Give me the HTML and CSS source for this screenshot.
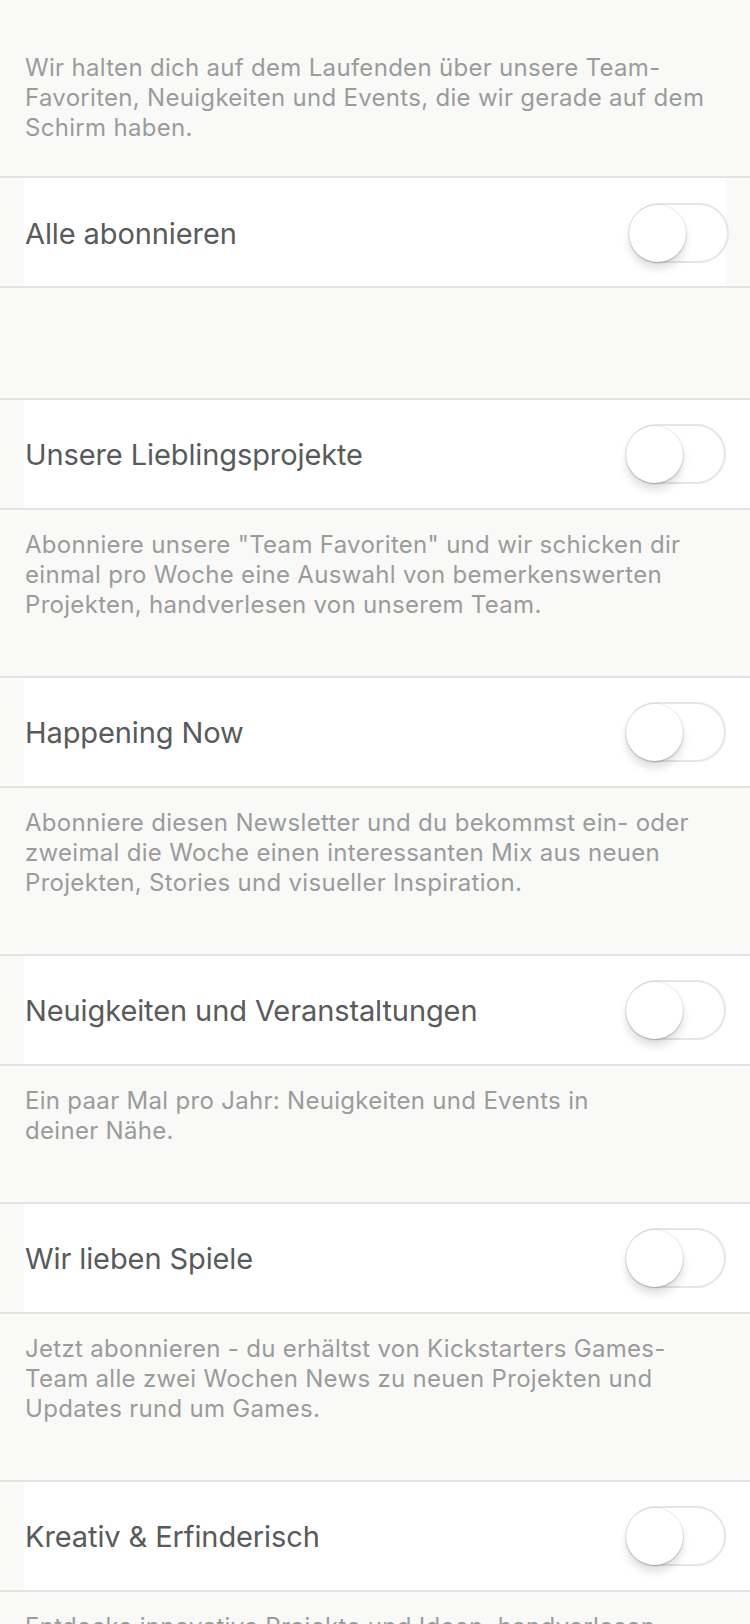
FILE: index.html
```html
<!DOCTYPE html>
<html lang="de">
<head>
<meta charset="utf-8">
<title>Newsletter</title>
<link rel="stylesheet" href="styles.css">
</head>
<body>
<div class="page">
  <p class="intro">Wir halten dich auf dem Laufenden über unsere Team-<br>Favoriten, Neuigkeiten und Events, die wir gerade auf dem<br>Schirm haben.</p>

  <div class="row row-all">
    <div class="row-inner">
      <span class="row-title">Alle abonnieren</span>
      <span class="switch"><span class="knob"></span></span>
    </div>
  </div>

  <div class="spacer"></div>

  <div class="row">
    <div class="row-inner">
      <span class="row-title">Unsere Lieblingsprojekte</span>
      <span class="switch"><span class="knob"></span></span>
    </div>
  </div>
  <p class="desc">Abonniere unsere "Team Favoriten" und wir schicken dir<br>einmal pro Woche eine Auswahl von bemerkenswerten<br>Projekten, handverlesen von unserem Team.</p>

  <div class="row">
    <div class="row-inner">
      <span class="row-title">Happening Now</span>
      <span class="switch"><span class="knob"></span></span>
    </div>
  </div>
  <p class="desc">Abonniere diesen Newsletter und du bekommst ein- oder<br>zweimal die Woche einen interessanten Mix aus neuen<br>Projekten, Stories und visueller Inspiration.</p>

  <div class="row">
    <div class="row-inner">
      <span class="row-title">Neuigkeiten und Veranstaltungen</span>
      <span class="switch"><span class="knob"></span></span>
    </div>
  </div>
  <p class="desc">Ein paar Mal pro Jahr: Neuigkeiten und Events in<br>deiner Nähe.</p>

  <div class="row">
    <div class="row-inner">
      <span class="row-title">Wir lieben Spiele</span>
      <span class="switch"><span class="knob"></span></span>
    </div>
  </div>
  <p class="desc">Jetzt abonnieren - du erhältst von Kickstarters Games-<br>Team alle zwei Wochen News zu neuen Projekten und<br>Updates rund um Games.</p>

  <div class="row">
    <div class="row-inner">
      <span class="row-title">Kreativ &amp; Erfinderisch</span>
      <span class="switch"><span class="knob"></span></span>
    </div>
  </div>
  <p class="desc">Entdecke innovative Projekte und Ideen, handverlesen<br>von unserem Team.</p>
</div>
</body>
</html>
```

FILE: styles.css
```css
* { box-sizing: border-box; }

html, body {
  margin: 0;
  padding: 0;
  background: #f9f9f8;
}

body {
  font-family: Inter, Roboto, "Liberation Sans", sans-serif;
  -webkit-font-smoothing: antialiased;
}

.page {
  width: 750px;
  overflow: hidden;
}

.intro {
  margin: 0;
  padding: 53px 24px 33px 25px;
  font-size: 24px;
  line-height: 30px;
  letter-spacing: 0.3px;
  color: #9a9c9c;
}

.desc {
  margin: 0;
  padding: 20px 24px 56px 25px;
  font-size: 24px;
  line-height: 30px;
  letter-spacing: 0.3px;
  color: #9a9c9c;
}

.spacer {
  height: 110px;
}

.row {
  border-top: 2px solid #e4e4e3;
  border-bottom: 2px solid #e4e4e3;
  background: #f9f9f8;
}

.row-inner {
  margin-left: 24px;
  height: 108px;
  background: #ffffff;
  display: flex;
  align-items: center;
  justify-content: space-between;
  padding: 0 24px 0 1px;
}

.row-all .row-inner {
  margin-right: 24px;
  padding-right: 0;
}

.row-all .switch {
  margin-right: -3px;
  margin-top: 2px;
}

.row-all .row-title {
  padding-top: 3px;
}

.row-title {
  font-size: 29px;
  letter-spacing: -0.1px;
  color: #575b5b;
  padding-top: 1px;
}

.switch {
  position: relative;
  width: 100px;
  height: 60px;
  border: 2px solid #e6e6e6;
  border-radius: 30px;
  background: #ffffff;
  flex: none;
}

.knob {
  position: absolute;
  left: -2px;
  top: 0px;
  width: 57px;
  height: 57px;
  border-radius: 50%;
  background: #ffffff;
  box-shadow: 0 0 0 1px rgba(0, 0, 0, 0.05), 0 1px 2px rgba(0, 0, 0, 0.18), 0 7px 8px rgba(0, 0, 0, 0.12);
}
```
